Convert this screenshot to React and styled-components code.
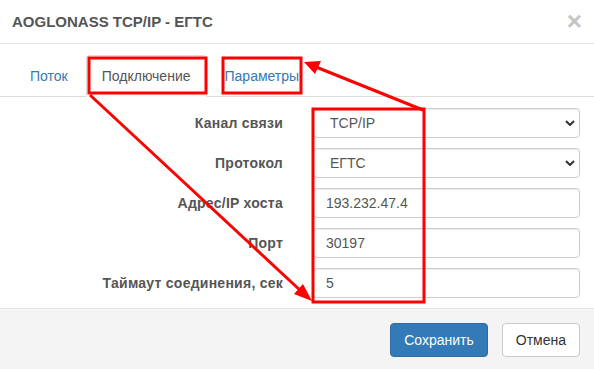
import styled, { createGlobalStyle } from "styled-components";

const Global = createGlobalStyle`
  html, body {
    margin: 0;
    padding: 0;
    background: #fff;
  }
  body {
    font-family: "Liberation Sans", Arial, sans-serif;
    color: #333;
  }
`;

const rows = [
  { label: "Канал связи", value: "TCP/IP", select: true },
  { label: "Протокол", value: "ЕГТС", select: true },
  { label: "Адрес/IP хоста", value: "193.232.47.4" },
  { label: "Порт", value: "30197" },
  { label: "Таймаут соединения, сек", value: "5" },
];

export default function App() {
  return (
    <Page>
      <Global />
      <Header>
        <Title>AOGLONASS TCP/IP - ЕГТС</Title>
        <Close>×</Close>
      </Header>
      <Tabs>
        <Tab>Поток</Tab>
        <Tab className="active">Подключение</Tab>
        <Tab>Параметры</Tab>
      </Tabs>
      <Form>
        {rows.map((r) => (
          <Row key={r.label}>
            <Label>{r.label}</Label>
            {r.select ? (
              <SelectWrap>
                <Select defaultValue={r.value}>
                  <option>{r.value}</option>
                </Select>
                <Chevron viewBox="0 0 10 6">
                  <path d="M1 1l4 4 4-4" />
                </Chevron>
              </SelectWrap>
            ) : (
              <Input defaultValue={r.value} />
            )}
          </Row>
        ))}
      </Form>
      <Footer>
        <Button $primary>Сохранить</Button>
        <Button>Отмена</Button>
      </Footer>
      <Marks viewBox="0 0 594 369">
        <g fill="none" stroke="#ff0000" strokeWidth="3">
          <rect x="89" y="58" width="117" height="35" />
          <rect x="223" y="58" width="78" height="35" />
          <rect x="313" y="109" width="111" height="193" />
          <line x1="90" y1="95" x2="302" y2="292" />
          <line x1="423" y1="110" x2="316" y2="67" />
        </g>
        <g fill="#ff0000">
          <polygon points="312,301 294,294 303,284" />
          <polygon points="304,62 321,61 315,74" />
        </g>
      </Marks>
    </Page>
  );
}

const Page = styled.div`
  position: relative;
  width: 594px;
  height: 369px;
  overflow: hidden;
  background: #fff;
`;

const Header = styled.div`
  height: 43px;
  padding: 0 12px;
  display: flex;
  align-items: center;
  justify-content: space-between;
  border-bottom: 1px solid #e5e5e5;
`;

const Title = styled.h4`
  margin: 0;
  font-size: 15px;
  font-weight: bold;
  color: #555;
`;

const Close = styled.span`
  font-size: 26px;
  font-weight: bold;
  color: #c4c4c4;
  line-height: 1;
  margin-top: -2px;
`;

const Tabs = styled.ul`
  list-style: none;
  margin: 11px 0 0;
  padding: 0 0 0 14px;
  display: flex;
  border-bottom: 1px solid #ddd;
`;

const Tab = styled.li`
  padding: 10px 15px;
  line-height: 20px;
  font-size: 14px;
  color: #337ab7;
  margin-right: 2px;
  margin-bottom: -1px;
  border: 1px solid transparent;
  border-radius: 4px 4px 0 0;

  &.active {
    color: #555;
    background: #fff;
    border-color: #ddd #ddd transparent;
  }
`;

const Form = styled.div`
  padding: 11px 14px 0 0;
  display: flex;
  flex-direction: column;
  gap: 10px;
  height: 200px;
  border-bottom: 1px solid #e5e5e5;
`;

const Row = styled.div`
  display: grid;
  grid-template-columns: 283px 1fr;
  column-gap: 30px;
  align-items: center;
`;

const Label = styled.label`
  text-align: right;
  font-size: 14px;
  font-weight: bold;
  letter-spacing: 0.25px;
  color: #555;
`;

const field = `
  box-sizing: border-box;
  width: 100%;
  height: 30px;
  border: 1px solid #ccc;
  border-radius: 4px;
  background: #fff;
  font-family: "Liberation Sans", Arial, sans-serif;
  font-size: 14px;
  color: #555;
  box-shadow: inset 0 1px 1px rgba(0, 0, 0, 0.075);
  outline: none;
`;

const Input = styled.input`
  ${field}
  padding: 0 12px;
`;

const SelectWrap = styled.div`
  position: relative;
`;

const Select = styled.select`
  ${field}
  appearance: none;
  padding: 0 16px;
`;

const Chevron = styled.svg`
  position: absolute;
  right: 5px;
  top: 12px;
  width: 10px;
  height: 6px;
  fill: none;
  stroke: #333;
  stroke-width: 2;
  pointer-events: none;
`;

const Footer = styled.div`
  height: 61px;
  background: #f4f4f4;
  display: flex;
  justify-content: flex-end;
  align-items: center;
  gap: 14px;
  padding: 0 14px;
`;

const Button = styled.button`
  height: 34px;
  padding: 0 13px;
  font-family: "Liberation Sans", Arial, sans-serif;
  font-size: 14px;
  border-radius: 4px;
  border: 1px solid ${(p) => (p.$primary ? "#2e6da4" : "#ccc")};
  background: ${(p) => (p.$primary ? "#337ab7" : "#fff")};
  color: ${(p) => (p.$primary ? "#fff" : "#333")};
`;

const Marks = styled.svg`
  position: absolute;
  left: 0;
  top: 0;
  width: 594px;
  height: 369px;
  pointer-events: none;
`;
